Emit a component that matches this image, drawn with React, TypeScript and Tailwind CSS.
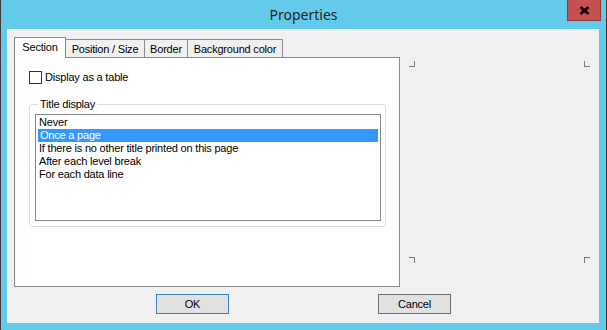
import React from "react";

const ui = { fontFamily: '"Liberation Sans", Arial, sans-serif' };

function Corner({ cls }: { cls: string }) {
  return <div className={`w-[6px] h-[6px] border-[#7a7a7a] ${cls}`} />;
}

export default function App() {
  const items = [
    "Never",
    "Once a page",
    "If there is no other title printed on this page",
    "After each level break",
    "For each data line",
  ];
  return (
    <div
      className="w-[607px] h-[330px] bg-[#64caea] border-x border-[#3a3a3a] flex flex-col text-[11px] text-black tracking-[-0.2px]"
      style={ui}
    >
      {/* title bar */}
      <div className="relative h-[29px] flex items-center justify-center shrink-0">
        <span
          className="text-[14px] text-[#1e1e1e] tracking-normal"
          style={{ fontFamily: '"Noto Sans", "Open Sans", sans-serif' }}
        >
          Properties
        </span>
        <div className="absolute right-[5px] top-0 w-[34px] h-[21px] bg-[#c75050] border border-[#8a3b3b] border-t-0 flex items-center justify-center">
          <svg width="11" height="9" viewBox="0 0 11 9">
            <path d="M1.5 1 L9.5 8 M9.5 1 L1.5 8" stroke="#000" strokeWidth="2.6" />
          </svg>
        </div>
      </div>

      {/* client */}
      <div className="ml-[6px] w-[592px] h-[294px] bg-[#f0f0f0] flex flex-col pl-[7px] pt-[8px] shrink-0">
        <div className="flex">
          {/* left column */}
          <div className="w-[386px] flex flex-col">
            <div className="flex items-end h-[20px]">
              <div className="relative z-10 w-[52px] h-[21px] -mb-[1px] bg-white border-l border-t border-r border-[#898c95] flex items-start justify-center pt-[2px] leading-[14px]">
                Section
              </div>
              <div className="w-[79px] h-[18px] border-t border-r border-[#898c95] flex items-center justify-center leading-[14px]">
                Position / Size
              </div>
              <div className="w-[43px] h-[18px] border-t border-r border-[#898c95] flex items-center justify-center leading-[14px]">
                Border
              </div>
              <div className="w-[95px] h-[18px] border-t border-r border-[#898c95] flex items-center justify-center leading-[14px]">
                Background color
              </div>
            </div>
            <div className="h-[230px] bg-white border border-[#898c95] flex flex-col pl-[14px] pt-[13px]">
              <div className="flex items-center h-[13px]">
                <div className="w-[13px] h-[13px] border border-[#333333] bg-white" />
                <span className="ml-[3px] leading-[13px]">Display as a table</span>
              </div>
              <fieldset className="mt-[13px] w-[357px] h-[130px] border border-[#d5dfe5] rounded-[3px] pl-[5px] pr-[4px]">
                <legend className="ml-[3px] px-[2px] leading-[14px]">Title display</legend>
                <div className="mt-[3px] w-[346px] h-[107px] border border-[#828790] bg-white p-[1px]">
                  {items.map((t, i) => (
                    <div
                      key={t}
                      className={`h-[13px] leading-[13px] pl-[2px] ${
                        i === 1 ? "bg-[#3399ff] text-white mx-[1px] pl-[1px]" : ""
                      }`}
                    >
                      {t}
                    </div>
                  ))}
                </div>
              </fieldset>
            </div>
          </div>

          {/* right area with corner markers */}
          <div className="ml-[9px] mt-[24px] w-[181px] h-[202px] flex flex-col justify-between">
            <div className="flex justify-between">
              <Corner cls="border-r border-b" />
              <Corner cls="border-l border-b" />
            </div>
            <div className="flex justify-between">
              <Corner cls="border-t border-r" />
              <Corner cls="border-t border-l" />
            </div>
          </div>
        </div>

        {/* buttons */}
        <div className="flex mt-[7px] pl-[142px] gap-[149px]">
          <div className="w-[73px] h-[20px] bg-[#e1e1e1] border border-[#3c7fb1] flex items-center justify-center leading-[14px]">
            OK
          </div>
          <div className="w-[73px] h-[20px] bg-[#e1e1e1] border border-[#707070] flex items-center justify-center leading-[14px]">
            Cancel
          </div>
        </div>
      </div>
    </div>
  );
}
